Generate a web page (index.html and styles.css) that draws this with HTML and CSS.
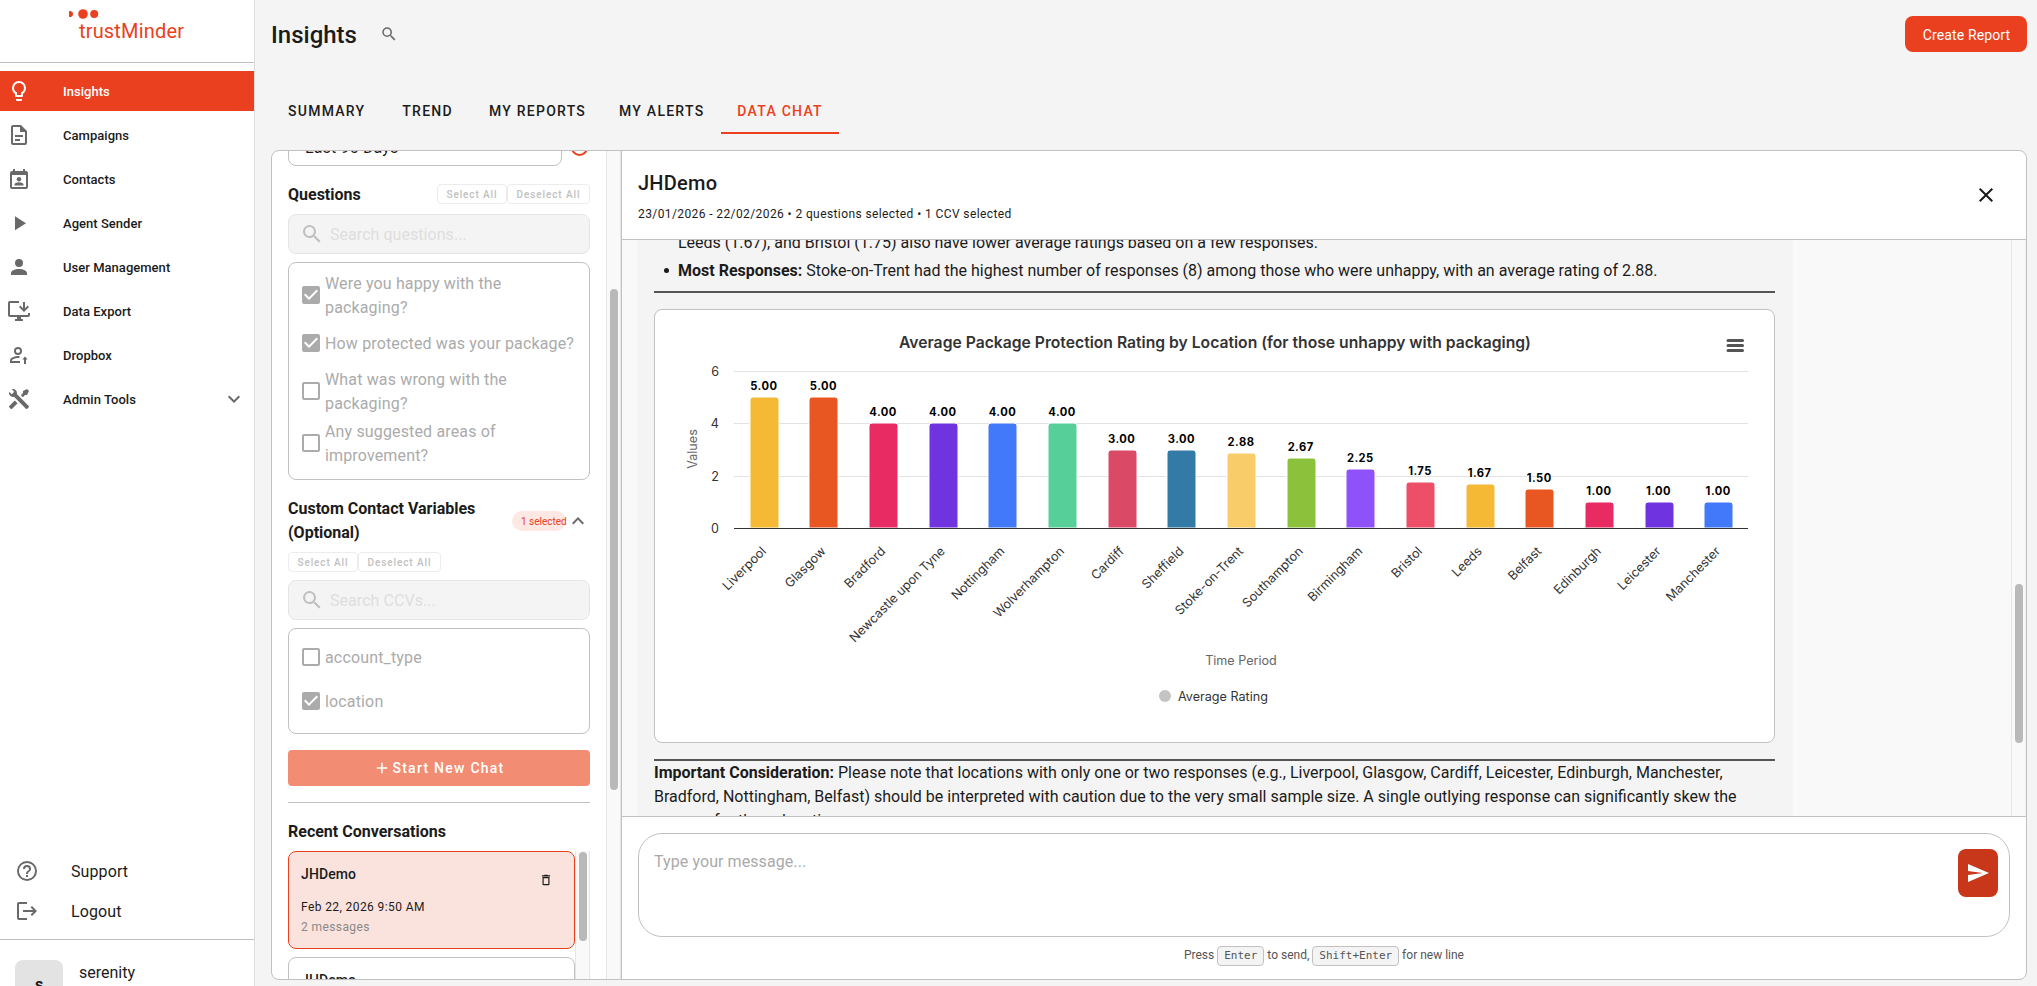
FILE: index.html
```
<!DOCTYPE html>
<html lang="en">
<head>
    <meta charset="UTF-8">
    <meta name="viewport" content="width=device-width, initial-scale=1.0">
    <title>trustMinder - Insights</title>
    <link rel="stylesheet" href="styles.css">
</head>
<body>

<!-- icon sprite -->
<svg class="sprite">
    <symbol id="i-bulb" viewBox="0 0 24 24"><path d="M12 2A7 7 0 0 1 19 9C19 11.38 17.81 13.47 16 14.74V17A1 1 0 0 1 15 18H9A1 1 0 0 1 8 17V14.74C6.19 13.47 5 11.38 5 9A7 7 0 0 1 12 2M9 21V20H15V21A1 1 0 0 1 14 22H10A1 1 0 0 1 9 21M12 4A5 5 0 0 0 7 9C7 11.05 8.23 12.81 10 13.58V16H14V13.58C15.77 12.81 17 11.05 17 9A5 5 0 0 0 12 4Z"/></symbol>
    <symbol id="i-doc" viewBox="0 0 24 24"><path d="M6,2A2,2 0 0,0 4,4V20A2,2 0 0,0 6,22H18A2,2 0 0,0 20,20V8L14,2H6M6,4H13V9H18V20H6V4M8,12V14H16V12H8M8,16V18H13V16H8Z"/></symbol>
    <symbol id="i-contacts" viewBox="0 0 24 24"><path fill-rule="evenodd" d="M6 2V4H5A2 2 0 0 0 3 6V20A2 2 0 0 0 5 22H19A2 2 0 0 0 21 20V6A2 2 0 0 0 19 4H18V2H16V4H8V2H6M5 8H19V20H5V8Z"/><circle cx="12" cy="12.2" r="2.2"/><path d="M7.5 18.5V17.6C7.5 16 10.2 15.3 12 15.3S16.5 16 16.5 17.6V18.5Z"/></symbol>
    <symbol id="i-play" viewBox="0 0 24 24"><path d="M8,5.14V19.14L19,12.14L8,5.14Z"/></symbol>
    <symbol id="i-user" viewBox="0 0 24 24"><path d="M12,4A4,4 0 0,1 16,8A4,4 0 0,1 12,12A4,4 0 0,1 8,8A4,4 0 0,1 12,4M12,14C16.42,14 20,15.79 20,18V20H4V18C4,15.79 7.58,14 12,14Z"/></symbol>
    <symbol id="i-export" viewBox="0 0 24 24"><path d="M21 14V16H3V4H12V2H3C1.89 2 1 2.89 1 4V16A2 2 0 0 0 3 18H10V20H8V22H16V20H14V18H21A2 2 0 0 0 23 16V14H21M17 13L22 8L20.6 6.6L18 9.2V3H16V9.2L13.4 6.6L12 8Z"/></symbol>
    <symbol id="i-dropbox" viewBox="0 0 24 24"><path d="M11 4A4 4 0 1 0 11 12A4 4 0 0 0 11 4M11 5.9A2.1 2.1 0 1 1 11 10.1A2.1 2.1 0 0 1 11 5.9M11 13C8 13 3 14.5 3 17.5V20H13V18.1H4.9V17.5C4.9 16.5 8 14.9 11 14.9H12.5V13.1ZM17 21V16.5H15.3L18 13.5L20.7 16.5H19V21Z"/></symbol>
    <symbol id="i-tools" viewBox="0 0 24 24"><path d="M21.71 20.29L20.29 21.71A1 1 0 0 1 18.88 21.71L7 9.85A3.81 3.81 0 0 1 6 10A4 4 0 0 1 2.22 4.7L4.76 7.24L5.29 6.71L6.71 5.29L7.24 4.76L4.7 2.22A4 4 0 0 1 10 6A3.81 3.81 0 0 1 9.85 7L21.71 18.88A1 1 0 0 1 21.71 20.29M2.29 18.88A1 1 0 0 0 2.29 20.29L3.71 21.71A1 1 0 0 0 5.12 21.71L10.59 16.25L7.76 13.42M20 2L16 4V6L13.83 8.17L15.83 10.17L18 8H20L22 4Z"/></symbol>
    <symbol id="i-down" viewBox="0 0 24 24"><path d="M7.41,8.58L12,13.17L16.59,8.58L18,10L12,16L6,10L7.41,8.58Z"/></symbol>
    <symbol id="i-up" viewBox="0 0 24 24"><path d="M7.41,15.41L12,10.83L16.59,15.41L18,14L12,8L6,14L7.41,15.41Z"/></symbol>
    <symbol id="i-help" viewBox="0 0 24 24"><path d="M11,18H13V16H11V18M12,2A10,10 0 0,0 2,12A10,10 0 0,0 12,22A10,10 0 0,0 22,12A10,10 0 0,0 12,2M12,20C7.59,20 4,16.41 4,12C4,7.59 7.59,4 12,4C16.41,4 20,7.59 20,12C20,16.41 16.41,20 12,20M12,6A4,4 0 0,0 8,10H10A2,2 0 0,1 12,8A2,2 0 0,1 14,10C14,12 11,11.75 11,15H13C13,12.75 16,12.5 16,10A4,4 0 0,0 12,6Z"/></symbol>
    <symbol id="i-logout" viewBox="0 0 24 24"><path d="M17 7l-1.41 1.41L18.17 11H8v2h10.17l-2.58 2.59L17 17l5-5zM4 5h8V3H4c-1.1 0-2 .9-2 2v14c0 1.1.9 2 2 2h8v-2H4V5z"/></symbol>
    <symbol id="i-search" viewBox="0 0 24 24"><path d="M9.5,3A6.5,6.5 0 0,1 16,9.5C16,11.11 15.41,12.59 14.44,13.73L14.71,14H15.5L20.5,19L19,20.5L14,15.5V14.71L13.73,14.44C12.59,15.41 11.11,16 9.5,16A6.5,6.5 0 0,1 3,9.5A6.5,6.5 0 0,1 9.5,3M9.5,5C7,5 5,7 5,9.5C5,12 7,14 9.5,14C12,14 14,12 14,9.5C14,7 12,5 9.5,5Z"/></symbol>
    <symbol id="i-checked" viewBox="0 0 24 24"><path d="M10,17L5,12L6.41,10.58L10,14.17L17.59,6.58L19,8M19,3H5C3.89,3 3,3.89 3,5V19C3,20.1 3.9,21 5,21H19C20.1,21 21,20.1 21,19V5C21,3.89 20.1,3 19,3Z"/></symbol>
    <symbol id="i-blank" viewBox="0 0 24 24"><path d="M19,3H5C3.89,3 3,3.89 3,5V19C3,20.1 3.9,21 5,21H19C20.1,21 21,20.1 21,19V5C21,3.89 20.1,3 19,3M19,5V19H5V5H19Z"/></symbol>
    <symbol id="i-plus" viewBox="0 0 24 24"><path d="M19,13H13V19H11V13H5V11H11V5H13V11H19V13Z"/></symbol>
    <symbol id="i-trash" viewBox="0 0 24 24"><path d="M6,19A2,2 0 0,0 8,21H16A2,2 0 0,0 18,19V7H6V19M8,9H16V19H8V9M15.5,4L14.5,3H9.5L8.5,4H5V6H19V4H15.5Z"/></symbol>
    <symbol id="i-close" viewBox="0 0 24 24"><path d="M19,6.41L17.59,5L12,10.59L6.41,5L5,6.41L10.59,12L5,17.59L6.41,19L12,13.41L17.59,19L19,17.59L13.41,12L19,6.41Z"/></symbol>
    <symbol id="i-send" viewBox="0 0 24 24"><path d="M2,21L23,12L2,3V10L17,12L2,14V21Z"/></symbol>
</svg>

<div class="app">
    <aside class="sidebar">
        <div class="logo">
            <svg width="254" height="62" viewBox="0 0 254 62">
                <path d="M69 11.2A3 3 0 1 1 69 16.8Z"/>
                <circle cx="83" cy="14" r="4.8"/>
                <circle cx="94.2" cy="14" r="4"/>
                <text x="79" y="38" textLength="105">trustMinder</text>
            </svg>
        </div>
        <nav class="menu">
            <a class="menu-item active"><svg class="icon"><use href="#i-bulb"/></svg><span>Insights</span></a>
            <a class="menu-item"><svg class="icon"><use href="#i-doc"/></svg><span>Campaigns</span></a>
            <a class="menu-item"><svg class="icon"><use href="#i-contacts"/></svg><span>Contacts</span></a>
            <a class="menu-item"><svg class="icon"><use href="#i-play"/></svg><span>Agent Sender</span></a>
            <a class="menu-item"><svg class="icon"><use href="#i-user"/></svg><span>User Management</span></a>
            <a class="menu-item"><svg class="icon"><use href="#i-export"/></svg><span>Data Export</span></a>
            <a class="menu-item"><svg class="icon"><use href="#i-dropbox"/></svg><span>Dropbox</span></a>
            <a class="menu-item"><svg class="icon"><use href="#i-tools"/></svg><span>Admin Tools</span><svg class="icon arrow"><use href="#i-down"/></svg></a>
        </nav>
        <div class="menu-bottom">
            <a class="bottom-item"><svg class="icon"><use href="#i-help"/></svg><span>Support</span></a>
            <a class="bottom-item"><svg class="icon"><use href="#i-logout"/></svg><span>Logout</span></a>
        </div>
        <div class="account">
            <div class="avatar">s</div>
            <div class="account-name">serenity</div>
        </div>
    </aside>

    <main class="main">
        <header class="topbar">
            <h1>Insights</h1>
            <svg class="icon icon-sm"><use href="#i-search"/></svg>
            <button class="btn-create">Create Report</button>
        </header>
        <div class="tabs">
            <a class="tab">SUMMARY</a>
            <a class="tab">TREND</a>
            <a class="tab">MY REPORTS</a>
            <a class="tab">MY ALERTS</a>
            <a class="tab active">DATA CHAT</a>
        </div>

        <div class="card">
            <div class="filters">
                <div class="filters-body">
                    <div class="range-row">
                        <div class="select">Last 90 Days</div>
                        <div class="reset"></div>
                    </div>

                    <div class="section-head">
                        <h3>Questions</h3>
                        <div class="mini-btns"><button class="mini">Select All</button><button class="mini mini-wide">Deselect All</button></div>
                    </div>
                    <div class="search"><svg class="icon"><use href="#i-search"/></svg><span>Search questions...</span></div>
                    <div class="checks">
                        <label class="check"><svg class="icon"><use href="#i-checked"/></svg><span>Were you happy with the packaging?</span></label>
                        <label class="check"><svg class="icon"><use href="#i-checked"/></svg><span>How protected was your package?</span></label>
                        <label class="check"><svg class="icon"><use href="#i-blank"/></svg><span>What was wrong with the packaging?</span></label>
                        <label class="check"><svg class="icon"><use href="#i-blank"/></svg><span>Any suggested areas of improvement?</span></label>
                    </div>

                    <div class="ccv-head">
                        <h3>Custom Contact Variables (Optional)</h3>
                        <span class="chip">1 selected</span>
                        <svg class="icon"><use href="#i-up"/></svg>
                    </div>
                    <div class="mini-btns ccv-btns"><button class="mini">Select All</button><button class="mini mini-wide">Deselect All</button></div>
                    <div class="search"><svg class="icon"><use href="#i-search"/></svg><span>Search CCVs...</span></div>
                    <div class="checks">
                        <label class="check"><svg class="icon"><use href="#i-blank"/></svg><span>account_type</span></label>
                        <label class="check"><svg class="icon"><use href="#i-checked"/></svg><span>location</span></label>
                    </div>

                    <button class="btn-start"><svg class="icon"><use href="#i-plus"/></svg>Start New Chat</button>
                    <div class="divider"></div>
                    <h3 class="recent-title">Recent Conversations</h3>
                    <div class="recent">
                        <div class="recent-list">
                            <div class="conv selected">
                                <div class="conv-title">JHDemo</div>
                                <svg class="icon trash"><use href="#i-trash"/></svg>
                                <div class="conv-date">Feb 22, 2026 9:50 AM</div>
                                <div class="conv-count">2 messages</div>
                            </div>
                            <div class="conv">
                                <div class="conv-title">JHDemo</div>
                            </div>
                        </div>
                        <div class="track track-recent"><div class="thumb"></div></div>
                    </div>
                </div>
                <div class="track track-filters"><div class="thumb"></div></div>
            </div>

            <section class="chat">
                <div class="chat-head">
                    <div>
                        <h2>JHDemo</h2>
                        <p>23/01/2026 - 22/02/2026 • 2 questions selected • 1 CCV selected</p>
                    </div>
                    <svg class="icon"><use href="#i-close"/></svg>
                </div>
                <div class="messages">
                    <div class="message">
                        <ul>
                            <li class="plain">Leeds (1.67), and Bristol (1.75) also have lower average ratings based on a few responses.</li>
                            <li><b>Most Responses:</b> Stoke-on-Trent had the highest number of responses (8) among those who were unhappy, with an average rating of 2.88.</li>
                        </ul>
                        <hr>
                        <div class="chart-box"><svg id="chart" width="1119" height="432" viewBox="655 310 1119 432"></svg></div>
                        <hr>
                        <p><b>Important Consideration:</b> Please note that locations with only one or two responses (e.g., Liverpool, Glasgow, Cardiff, Leicester, Edinburgh, Manchester, Bradford, Nottingham, Belfast) should be interpreted with caution due to the very small sample size. A single outlying response can significantly skew the average for those locations.</p>
                    </div>
                    <div class="track track-chat"><div class="thumb"></div></div>
                </div>
                <div class="composer">
                    <div class="input">
                        <span>Type your message...</span>
                        <button class="btn-send"><svg class="icon"><use href="#i-send"/></svg></button>
                    </div>
                    <div class="hint">Press <kbd>Enter</kbd> to send, <kbd>Shift+Enter</kbd> for new line</div>
                </div>
            </section>
        </div>
    </main>
</div>

<script>
const ratings = [
    ['Liverpool', 5], ['Glasgow', 5], ['Bradford', 4], ['Newcastle upon Tyne', 4],
    ['Nottingham', 4], ['Wolverhampton', 4], ['Cardiff', 3], ['Sheffield', 3],
    ['Stoke-on-Trent', 2.88], ['Southampton', 2.67], ['Birmingham', 2.25], ['Bristol', 1.75],
    ['Leeds', 1.67], ['Belfast', 1.5], ['Edinburgh', 1], ['Leicester', 1], ['Manchester', 1]
];
const colors = ['#f5b935', '#e85622', '#e92b63', '#6f33e0', '#4279fa', '#56cf98',
    '#da4a67', '#347aa6', '#f8cc68', '#8cc23b', '#8f52fa', '#ed4f68'];

const left = 734, right = 1748, base = 528, unit = 26.15;
const step = (right - left) / ratings.length;
let out = '';

// grid and y axis
[0, 2, 4, 6].forEach(v => {
    const y = Math.round(base - v * unit) + 0.5;
    if (v > 0) out += `<path class="grid" d="M${left} ${y}H${right}"/>`;
    out += `<text class="tick" x="719" y="${y + 4}" text-anchor="end">${v}</text>`;
});

// bars with rounded tops
ratings.forEach(([name, value], i) => {
    const cx = left + step * (i + 0.5);
    const x = Math.round(cx - 14);
    const y = Math.round(base - value * unit);
    out += `<path class="bar" fill="${colors[i % colors.length]}" d="M${x} ${base}V${y + 3}a3 3 0 0 1 3 -3h23a3 3 0 0 1 3 3V${base}Z"/>`;
    out += `<text class="value" x="${cx}" y="${y - 7}" text-anchor="middle">${value.toFixed(2)}</text>`;
    out += `<text class="tick" x="${cx + 3}" y="552" text-anchor="end" transform="rotate(-45 ${cx + 3} 552)">${name}</text>`;
});

out += `<path class="axis" d="M${left} ${base + 0.5}H${right}"/>`;
out += '<text class="chart-title" x="1215" y="348" text-anchor="middle">Average Package Protection Rating by Location (for those unhappy with packaging)</text>';
out += '<text class="axis-title" x="697" y="449" text-anchor="middle" transform="rotate(-90 697 449)">Values</text>';
out += '<text class="axis-title" x="1241" y="665" text-anchor="middle">Time Period</text>';
out += '<circle cx="1165" cy="696" r="6" fill="#c4c4c4"/><text class="legend" x="1178" y="701">Average Rating</text>';
out += '<path class="burger" d="M1728 340.5H1742.5M1728 345.5H1742.5M1728 350.5H1742.5"/>';
document.getElementById('chart').innerHTML = out;
</script>
</body>
</html>
```
FILE: styles.css
```
* {box-sizing: border-box;}
body {margin: 0; font-family: Roboto, Arial, sans-serif; font-size: 16px; line-height: 24px; color: #1c1b1b; background-color: #f4f4f4; overflow: hidden;}
h1, h2, h3, p, ul {margin: 0;}
button {font-family: inherit; border: none; margin: 0;}
.sprite {position: absolute; width: 0; height: 0;}
.icon {width: 24px; height: 24px; fill: #6b6868; flex: none; display: block;}
.app {display: flex; height: 986px; overflow: hidden;}

/* sidebar */
.sidebar {width: 255px; flex: none; background-color: #fff; border-right: 1px solid #dcdcdc; display: flex; flex-direction: column;}
.logo {height: 63px; border-bottom: 1px solid #c4c0c0; flex: none;}
.logo svg {display: block; fill: #eb4020;}
.logo text {font-size: 20px;}
.menu {padding-top: 8px; display: flex; flex-direction: column; gap: 4px;}
.menu-item {display: flex; align-items: center; height: 40px; padding: 0 8px 0 7px; font-size: 13px; font-weight: 500; letter-spacing: 0.03px;}
.menu-item span {margin-left: 32px; padding-top: 2px; flex: 1;}
.menu-item.active {background-color: #eb4020; color: #fff;}
.menu-item.active .icon {fill: #fff;}
.menu-bottom {margin-top: auto;}
.bottom-item {display: flex; align-items: center; gap: 32px; height: 40px; padding-left: 15px;}
.bottom-item span {padding-top: 2px; letter-spacing: 0.1px;}
.account {height: 47px; margin-top: 8px; border-top: 1px solid #c4c0c0; display: flex; padding: 20px 15px 0; flex: none; overflow: hidden;}
.avatar {width: 48px; height: 48px; flex: none; border-radius: 8px; background-color: #e3e3e3; text-align: center; line-height: 49px; font-weight: 700;}
.account-name {margin-left: 16px; padding-top: 1px;}

/* top */
.main {flex: 1; padding: 0 10px 0 16px; display: flex; flex-direction: column;}
.topbar {display: flex; align-items: center; height: 68px; flex: none;}
.topbar h1 {font-size: 24px; font-weight: 500; line-height: 32px; padding-top: 2px;}
.icon-sm {width: 18px; height: 18px; margin-left: 23px;}
.btn-create {margin-left: auto; width: 122px; height: 36px; padding: 1px 0 0 1px; border-radius: 8px; background-color: #eb4020; color: #fff; font-size: 14px; letter-spacing: 0.13px;}
.tabs {display: flex; height: 66px; padding-left: 1px; align-items: flex-end; flex: none;}
.tab {height: 48px; padding: 0 16px; margin-right: 1px; line-height: 50px; font-size: 14px; font-weight: 500; letter-spacing: 1.25px;}
.tab:nth-child(1) {margin-right: 5px;}
.tab:nth-child(2) {margin-right: 4px;}
.tab.active {color: #eb4020; border-bottom: 2px solid #eb4020;}

.card {margin-top: 16px; height: 830px; border: 1px solid #c4c0c0; border-radius: 8px; background-color: #fff; display: flex; overflow: hidden;}
.track {background-color: #f9f9f9; border-left: 1px solid #e6e6e6; border-right: 1px solid #e6e6e6; width: 15px; flex: none;}
.thumb {width: 8px; margin: 0 auto; border-radius: 4px; background-color: #b9b9b9;}

/* filters */
.filters {width: 350px; border-right: 1px solid #c4c0c0; display: flex; flex: none; overflow: hidden;}
.filters-body {width: 334px; padding: 0 16px; margin-top: -25px; flex: none;}
.filters h3 {font-size: 16px; font-weight: 700;}
.track-filters .thumb {height: 501px; margin-top: 138px;}
.range-row {display: flex; align-items: center;}
.select {width: 274px; height: 40px; border: 1px solid #c4c0c0; border-radius: 8px; padding-left: 16px; line-height: 42px; letter-spacing: 0.15px;}
.reset {width: 17px; height: 17px; margin: 2px 0 0 9px; border: 2px solid #eb4020; border-radius: 50%;}
.section-head {display: flex; justify-content: space-between; align-items: center; height: 32px; margin-top: 12px;}
.section-head h3 {padding-top: 2px;}
.mini-btns {display: flex;}
.mini {width: 70px; height: 20px; padding: 1px 0 0; border: 1px solid #ececec; border-radius: 4px; background-color: #fff; color: #c1c1c1; font-size: 10px; font-weight: 500; letter-spacing: 0.893px;}
.mini-wide {width: 83px;}
.search {display: flex; align-items: center; gap: 6px; height: 40px; margin-top: 4px; padding-left: 11px; border: 1px solid #e4e4e4; border-radius: 8px; background-color: #f4f4f4; color: #dedede; letter-spacing: 0.05px;}
.search span {padding-top: 1px;}
.search .icon {fill: #c1bebe;}
.checks {margin-top: 8px; padding: 8px 10px 12px; border: 1px solid #c4c0c0; border-radius: 8px; display: flex; flex-direction: column; gap: 4px;}
.check {display: flex; align-items: center; gap: 2px; min-height: 40px; color: #ababab; letter-spacing: 0.15px;}
.check span {padding-top: 1px; margin-bottom: -1px;}
.check .icon {fill: #ababab;}
.ccv-head {display: flex; align-items: center; margin-top: 17px;}
.ccv-head h3 {width: 224px;}
.chip {width: 54px; height: 20px; padding-left: 9px; border-radius: 10px; background-color: #fde8e4; color: #eb4020; font-size: 10px; line-height: 21px; white-space: nowrap;}
.ccv-btns {margin: 7px 0 8px;}
.btn-start {display: flex; align-items: center; justify-content: center; gap: 1px; width: 302px; height: 36px; margin-top: 16px; border-radius: 4px; background-color: #f28c73; color: #fff; font-size: 14px; font-weight: 500; letter-spacing: 1.25px;}
.btn-start .icon {width: 18px; height: 18px; fill: #fff;}
.divider {height: 1px; margin-top: 16px; background-color: #c4c0c0;}
.filters .recent-title {margin: 17px 0 7px;}
.recent {display: flex; height: 200px;}
.recent-list {width: 287px; display: flex; flex-direction: column; gap: 8px;}
.conv {position: relative; height: 98px; flex: none; padding: 10px 12px; border: 1px solid #c4c0c0; border-radius: 8px;}
.conv.selected {background-color: #fae3dd; border-color: #eb4020;}
.conv-title {font-size: 14px; font-weight: 500; letter-spacing: 0.1px;}
.conv-date, .conv-count {font-size: 12px; line-height: 20px; letter-spacing: 0.4px;}
.conv-date {margin-top: 11px;}
.conv-count {color: #888;}
.trash {position: absolute; width: 14px; height: 14px; right: 21px; top: 21px; fill: #1c1b1b;}
.track-recent .thumb {height: 89px; margin-top: 1px;}

/* chat */
.chat {flex: 1; display: flex; flex-direction: column;}
.chat-head {display: flex; justify-content: space-between; align-items: center; height: 89px; padding: 0 28px 0 16px; border-bottom: 1px solid #c4c0c0; flex: none;}
.chat-head h2 {font-size: 20px; font-weight: 500; line-height: 32px; letter-spacing: 0.25px;}
.chat-head p {font-size: 12px; line-height: 20px; margin-top: 5px; letter-spacing: 0.4px;}
.chat-head .icon {fill: #1c1b1b;}
.messages {height: 576px; display: flex; justify-content: space-between; background-color: #f9f9f9; overflow: hidden; flex: none;}
.message {width: 1156px; height: 700px; margin-left: 15px; padding: 0 18px 0 17px; background-color: #f4f4f4;}
.message ul {padding-left: 27px; margin-top: -9px;}
.message li {margin-bottom: 4px; text-indent: -3px;}
.message .plain {list-style: none;}
.message hr {height: 2px; margin: 0; border: none; background-color: #555;}
.message ul + hr {margin-top: 8px;}
.chart-box {margin: 16px 0; height: 434px; border: 1px solid #c4c0c0; border-radius: 8px; background-color: #fff;}
.chart-box svg {display: block;}
.track-chat {border-right-color: #f0f0f0;}
.track-chat .thumb {height: 159px; margin-top: 344px;}
.composer {flex: 1; border-top: 1px solid #c4c0c0; padding: 16px;}
.input {height: 104px; padding: 15px 11px 0 15px; border: 1px solid #c4c0c0; border-radius: 24px; display: flex; justify-content: space-between; color: #aaa; letter-spacing: 0.08px;}
.input span {padding-top: 1px;}
.btn-send {width: 40px; height: 48px; padding: 0 8px; border-radius: 8px; background-color: #c8371a;}
.btn-send .icon {fill: #fff;}
.hint {margin-top: 6px; text-align: center; font-size: 12px; color: #555;}
kbd {display: inline-block; height: 20px; line-height: 18px; padding: 0 6px; border: 1px solid #c4c0c0; border-radius: 4px; background-color: #f4f4f4; font-family: "DejaVu Sans Mono", monospace; font-size: 11px;}

/* chart */
#chart {font-family: Inter, Roboto, sans-serif;}
.grid {stroke: #e2e2e2; stroke-width: 1;}
.axis {stroke: #333; stroke-width: 1;}
.bar {stroke: #fff; stroke-width: 1;}
.tick, .legend {font-size: 12.6px; fill: #333;}
.axis-title {font-size: 12.6px; fill: #666;}
.value {font-size: 11.2px; font-weight: 700; letter-spacing: 0.45px; fill: #000; stroke: #fff; stroke-width: 2px; paint-order: stroke; stroke-linejoin: round;}
.chart-title {font-size: 15.7px; font-weight: 600; fill: #333;}
.burger {stroke: #555; stroke-width: 3; stroke-linecap: round; fill: none;}
```
